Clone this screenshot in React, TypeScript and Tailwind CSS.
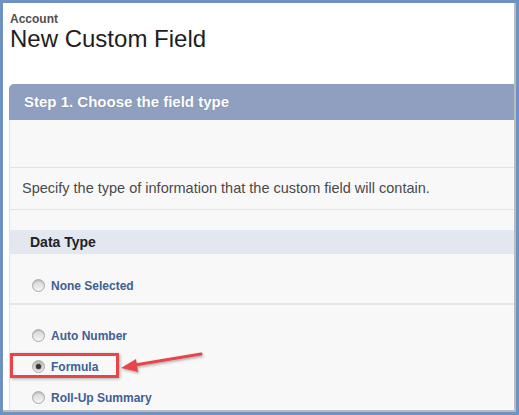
import React from "react";

function Radio({ checked }: { checked?: boolean }) {
  return (
    <span className="w-[13px] h-[13px] rounded-full border border-[#a8a8a8] bg-linear-to-b from-[#d4d4d4] to-[#f6f6f6] flex items-center justify-center shrink-0 shadow-[inset_0_1px_1px_rgba(0,0,0,0.15)]">
      {checked && <span className="w-[5px] h-[5px] rounded-full bg-[#333] shadow-[0_0_2px_1px_rgba(0,0,0,0.35)]" />}
    </span>
  );
}

function Option({ label, checked }: { label: string; checked?: boolean }) {
  return (
    <div className="h-[31px] flex items-center pl-[22px] gap-[6px]">
      <Radio checked={checked} />
      <span className="text-[12px] font-bold text-[#3d6192]">{label}</span>
    </div>
  );
}

export default function App() {
  return (
    <div
      className="relative w-[519px] h-[415px] bg-[#6e93c3] p-[3px] overflow-hidden"
      style={{ fontFamily: '"Liberation Sans", Arial, sans-serif' }}
    >
      <div className="w-full h-full bg-white border-r-2 border-b-2 border-[#bcbcbc] flex flex-col pl-[6px] overflow-hidden">
        <div className="pl-[1px]">
          <div className="mt-[10px] text-[12px] leading-[13px] font-bold text-[#505050]">Account</div>
          <div className="text-[24px] leading-[26px] text-[#1e1e1e]">New Custom Field</div>
        </div>
        <div className="mt-[32px] h-[36px] shrink-0 bg-[#8e9fbf] rounded-tl-[5px] flex items-center pl-[15px]">
          <span className="text-[15px] font-bold text-white [text-shadow:0_0_1px_rgba(60,70,100,0.4)]">
            Step 1. Choose the field type
          </span>
        </div>
        <div className="flex-1 bg-[#f8f8f8] border-l border-[#e2e2e2] flex flex-col">
          <div className="h-[48px] shrink-0 border-b border-[#e3e3e3]" />
          <div className="h-[42px] shrink-0 border-b border-[#e3e3e3] flex items-center pl-[12px]">
            <span className="text-[14.5px] text-[#4a4a4a]">
              Specify the type of information that the custom field will contain.
            </span>
          </div>
          <div className="h-[20px] shrink-0" />
          <div className="h-[24px] shrink-0 bg-[#e3e7f0] flex items-center pl-[20px]">
            <span className="text-[14px] font-bold text-[#222]">Data Type</span>
          </div>
          <div className="h-[51px] shrink-0 border-b-2 border-[#e6e6e6] pt-[16px]">
            <Option label="None Selected" />
          </div>
          <div className="pt-[15px]">
            <Option label="Auto Number" />
            <Option label="Formula" checked />
            <Option label="Roll-Up Summary" />
          </div>
        </div>
      </div>

      <div className="absolute left-[10px] top-[353px] w-[109px] h-[25px] border-[3px] border-[#e8454b] shadow-[1px_1px_3px_rgba(0,0,0,0.3)]" />
      <svg className="absolute left-[115px] top-[345px]" width="100" height="32" viewBox="0 0 100 32">
        <defs>
          <filter id="sh" x="-20%" y="-50%" width="140%" height="200%">
            <feDropShadow dx="1" dy="1.5" stdDeviation="1" floodColor="#000" floodOpacity="0.3" />
          </filter>
        </defs>
        <g filter="url(#sh)">
          <line x1="86" y1="9" x2="20" y2="20" stroke="#e8454b" strokeWidth="3" strokeLinecap="round" />
          <polygon points="6,23 21,14 23,27" fill="#e8454b" />
        </g>
      </svg>
    </div>
  );
}
